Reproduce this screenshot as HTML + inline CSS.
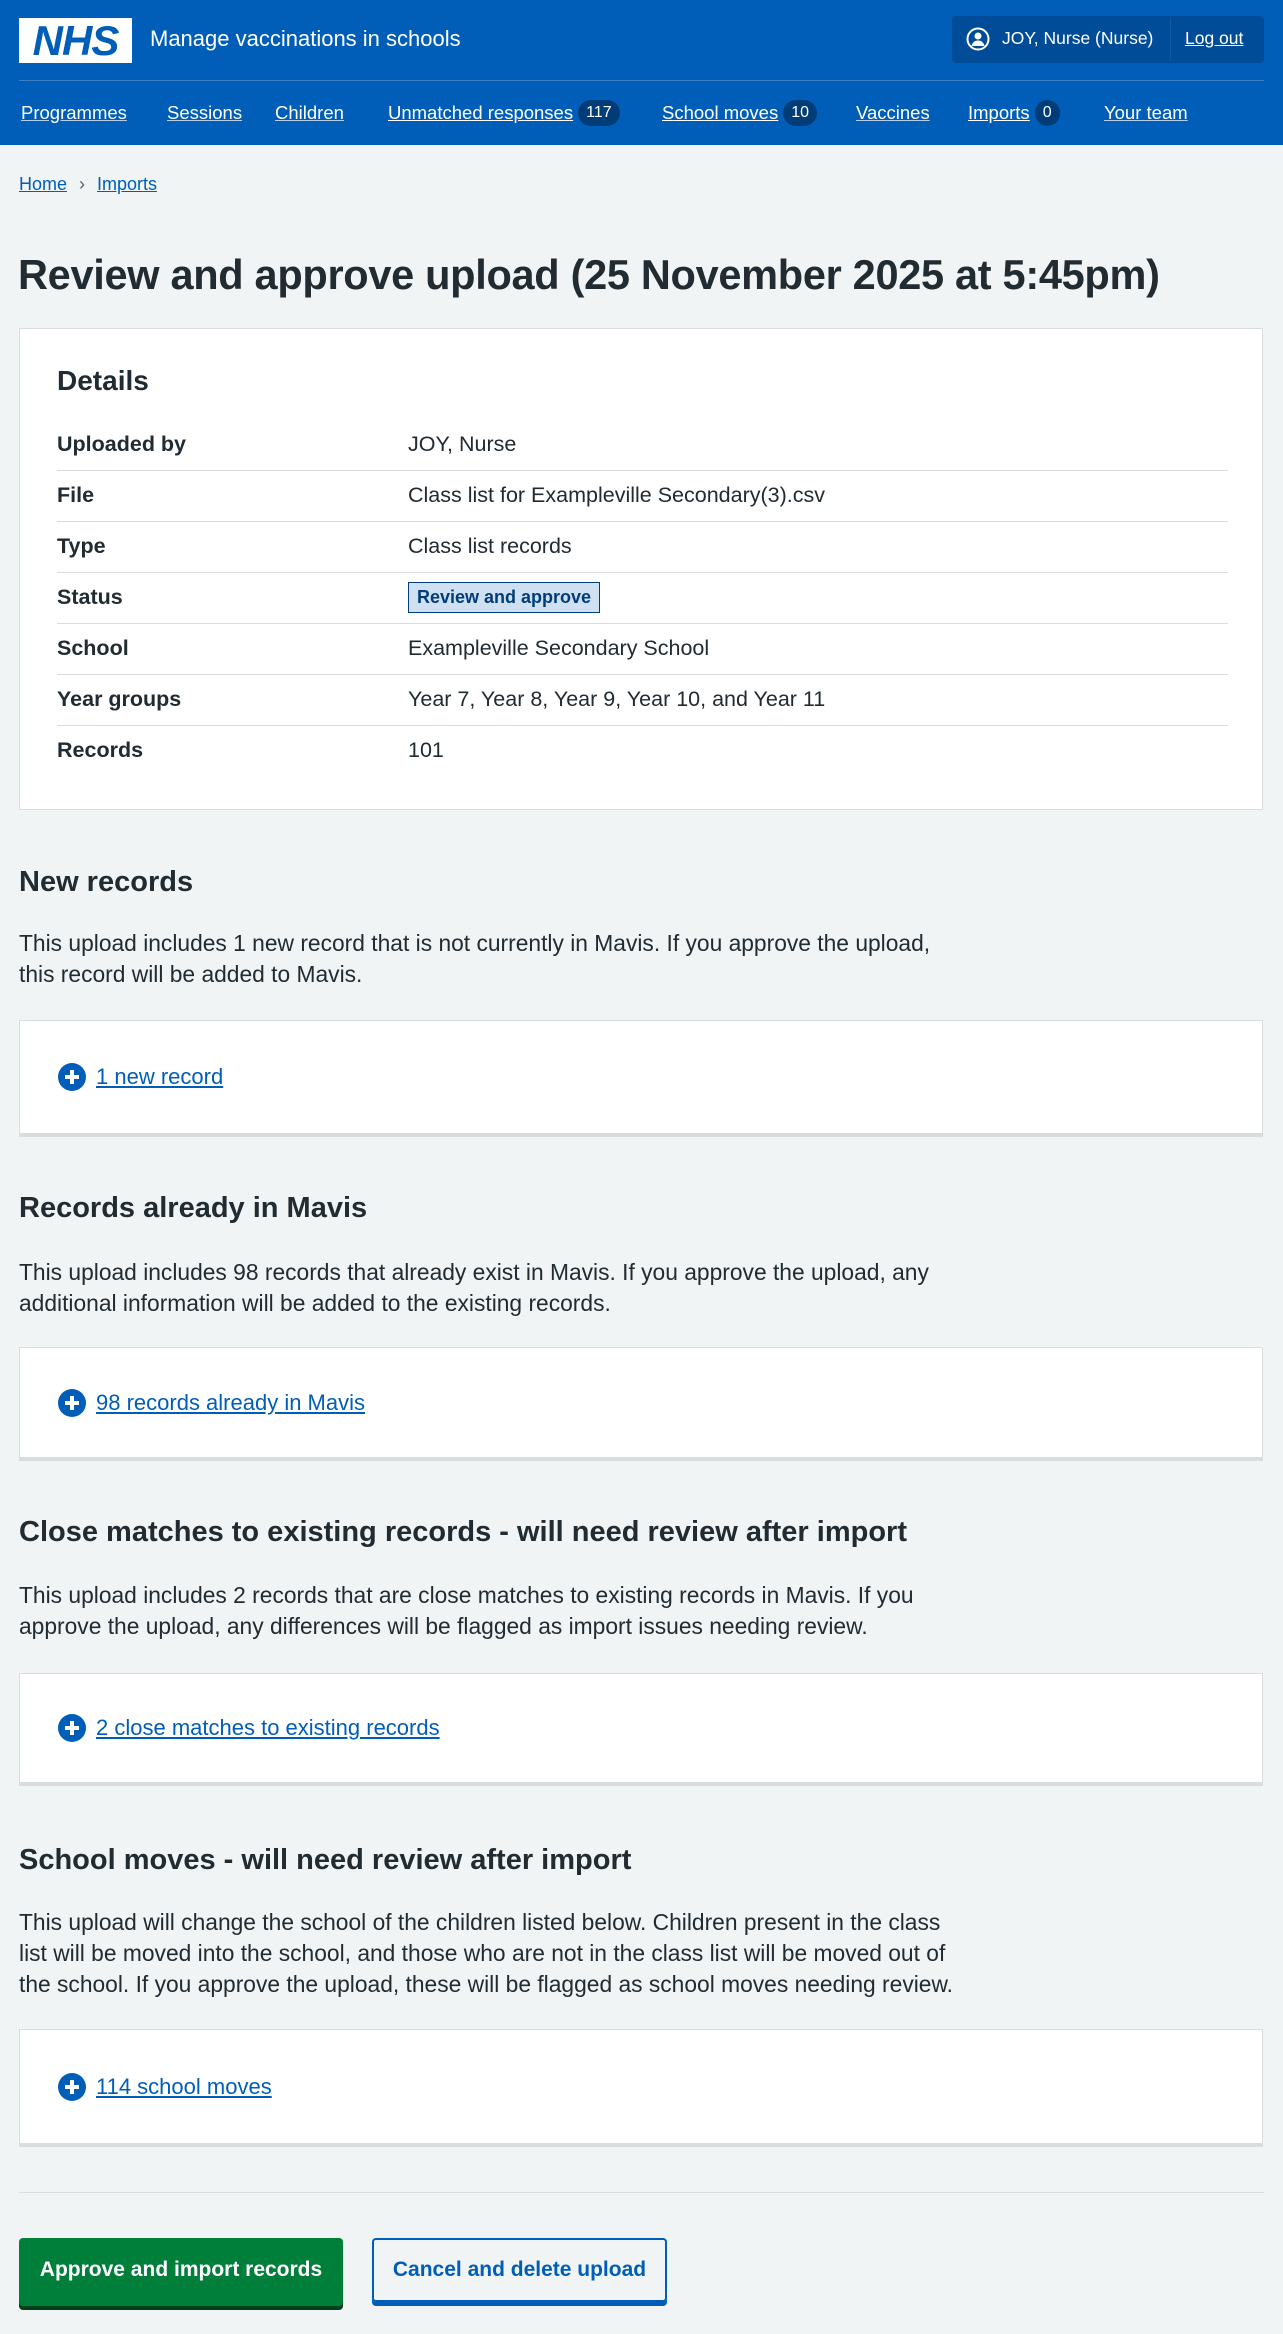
<!DOCTYPE html>
<html><head><meta charset="utf-8"><style>
*{margin:0;padding:0;box-sizing:border-box}
body{width:1283px;height:2334px;background:#f0f4f5;font-family:"Liberation Sans",sans-serif;color:#212b32;position:relative;overflow:hidden}
.a{position:absolute;white-space:nowrap}
a{color:#005eb8;text-decoration:underline}
header{position:absolute;left:0;top:0;width:1283px;height:145px;background:#005eb8}
.nav{color:#fff;font-size:18.5px;top:99px;line-height:28px;text-decoration:underline;text-decoration-color:rgba(255,255,255,.7)}
.cnt{display:inline-block;background:#003d78;color:#fff;border-radius:14px;font-size:16px;padding:0 8px;margin-left:5px;text-decoration:none;line-height:26px;vertical-align:top;margin-top:1px}
h2{font-size:29px;font-weight:bold;position:absolute;left:19px;white-space:nowrap}
p.t{position:absolute;left:19px;font-size:22.8px;line-height:31px;white-space:nowrap}
.card{position:absolute;left:19px;width:1244px;background:#fff;border:1px solid #d8dde0;border-bottom:4px solid #d8dde0}
.lnk{position:absolute;left:38px;top:50%;transform:translateY(-50%);font-size:22px;display:flex;align-items:center}
.ic{width:28px;height:28px;border-radius:50%;background:#005eb8;position:relative;margin-right:10px}
.ic:before{content:"";position:absolute;left:7px;top:12px;width:14px;height:4px;background:#fff}
.ic:after{content:"";position:absolute;left:12px;top:7px;width:4px;height:14px;background:#fff}
.row{position:absolute;left:37px;width:1171px;height:51px;border-bottom:1px solid #d8dde0;font-size:21.5px}
.row b{position:absolute;left:0;top:12px}
.row span{position:absolute;left:351px;top:12px}
</style></head><body>
<header>
<div class="a" style="left:19px;top:18px;width:113px;height:45px;background:#fff;color:#005eb8;font-weight:bold;font-style:italic;font-size:42px;line-height:45px;text-align:center;letter-spacing:-1px">NHS</div>
<div class="a" style="left:150px;top:26px;color:#fff;font-size:22px">Manage vaccinations in schools</div>
<div class="a" style="left:952px;top:16px;width:312px;height:47px;background:#004c99;border-radius:4px"></div>
<div class="a" style="left:1170px;top:18px;width:1px;height:43px;background:#0a5aa8"></div>
<svg class="a" style="left:966px;top:27px" width="24" height="24" viewBox="0 0 24 24"><circle cx="12" cy="12" r="10.5" fill="none" stroke="#fff" stroke-width="2"/><circle cx="12" cy="9" r="3.5" fill="#fff"/><path d="M5.5 19c1-4 3.5-5.5 6.5-5.5s5.5 1.5 6.5 5.5" fill="#fff"/></svg>
<div class="a" style="left:1002px;top:28px;color:#fff;font-size:17.5px">JOY, Nurse (Nurse)</div>
<div class="a" style="left:1185px;top:28px;color:#fff;font-size:17.5px;text-decoration:underline">Log out</div>
<div class="a" style="left:19px;top:80px;width:1245px;height:1px;background:#3c7fc4"></div>
<div class="a nav" style="left:21px">Programmes</div>
<div class="a nav" style="left:167px">Sessions</div>
<div class="a nav" style="left:275px">Children</div>
<div class="a nav" style="left:388px"><u>Unmatched responses</u><span class="cnt">117</span></div>
<div class="a nav" style="left:662px"><u>School moves</u><span class="cnt">10</span></div>
<div class="a nav" style="left:856px">Vaccines</div>
<div class="a nav" style="left:968px"><u>Imports</u><span class="cnt">0</span></div>
<div class="a nav" style="left:1104px">Your team</div>
</header>
<div class="a" style="left:19px;top:174px;font-size:18px"><a>Home</a><span style="margin:0 12px;color:#4c6272">›</span><a>Imports</a></div>
<div class="a" style="left:18px;top:251px;font-size:41.5px;font-weight:bold;letter-spacing:-0.3px">Review and approve upload (25 November 2025 at 5:45pm)</div>

<div class="a" style="left:19px;top:328px;width:1244px;height:482px;background:#fff;border:1px solid #d8dde0">
<div class="a" style="left:37px;top:36px;font-size:28px;font-weight:bold">Details</div>
<div class="row" style="top:91px"><b>Uploaded by</b><span>JOY, Nurse</span></div>
<div class="row" style="top:142px"><b>File</b><span>Class list for Exampleville Secondary(3).csv</span></div>
<div class="row" style="top:193px"><b>Type</b><span>Class list records</span></div>
<div class="row" style="top:244px"><b>Status</b><span style="top:9px;background:#cfe0f0;border:1px solid #003d78;color:#003d78;font-weight:bold;font-size:18px;padding:4px 8px">Review and approve</span></div>
<div class="row" style="top:295px"><b>School</b><span>Exampleville Secondary School</span></div>
<div class="row" style="top:346px"><b>Year groups</b><span>Year 7, Year 8, Year 9, Year 10, and Year 11</span></div>
<div class="row" style="top:397px;border:none"><b>Records</b><span>101</span></div>
</div>

<h2 style="top:866px">New records</h2>
<p class="t" style="top:928px">This upload includes 1 new record that is not currently in Mavis. If you approve the upload,<br>this record will be added to Mavis.</p>
<div class="card" style="top:1020px;height:117px"><div class="lnk"><span class="ic"></span><a>1 new record</a></div></div>

<h2 style="top:1192px">Records already in Mavis</h2>
<p class="t" style="top:1257px">This upload includes 98 records that already exist in Mavis. If you approve the upload, any<br>additional information will be added to the existing records.</p>
<div class="card" style="top:1347px;height:114px"><div class="lnk"><span class="ic"></span><a>98 records already in Mavis</a></div></div>

<h2 style="top:1516px">Close matches to existing records - will need review after import</h2>
<p class="t" style="top:1580px">This upload includes 2 records that are close matches to existing records in Mavis. If you<br>approve the upload, any differences will be flagged as import issues needing review.</p>
<div class="card" style="top:1673px;height:113px"><div class="lnk"><span class="ic"></span><a>2 close matches to existing records</a></div></div>

<h2 style="top:1844px">School moves - will need review after import</h2>
<p class="t" style="top:1907px">This upload will change the school of the children listed below. Children present in the class<br>list will be moved into the school, and those who are not in the class list will be moved out of<br>the school. If you approve the upload, these will be flagged as school moves needing review.</p>
<div class="card" style="top:2029px;height:118px"><div class="lnk"><span class="ic"></span><a>114 school moves</a></div></div>

<div class="a" style="left:19px;top:2192px;width:1245px;height:1px;background:#d8dde0"></div>
<div class="a" style="left:19px;top:2238px;width:324px;height:68px;background:#007f3b;border-radius:4px;box-shadow:0 4px 0 #00401e;color:#fff;font-size:21px;font-weight:bold;line-height:64px;text-align:center">Approve and import records</div>
<div class="a" style="left:372px;top:2238px;width:295px;height:64px;border:2px solid #005eb8;border-radius:4px;box-shadow:0 4px 0 #005eb8;color:#005eb8;font-size:21px;font-weight:bold;line-height:60px;text-align:center">Cancel and delete upload</div>
</body></html>
